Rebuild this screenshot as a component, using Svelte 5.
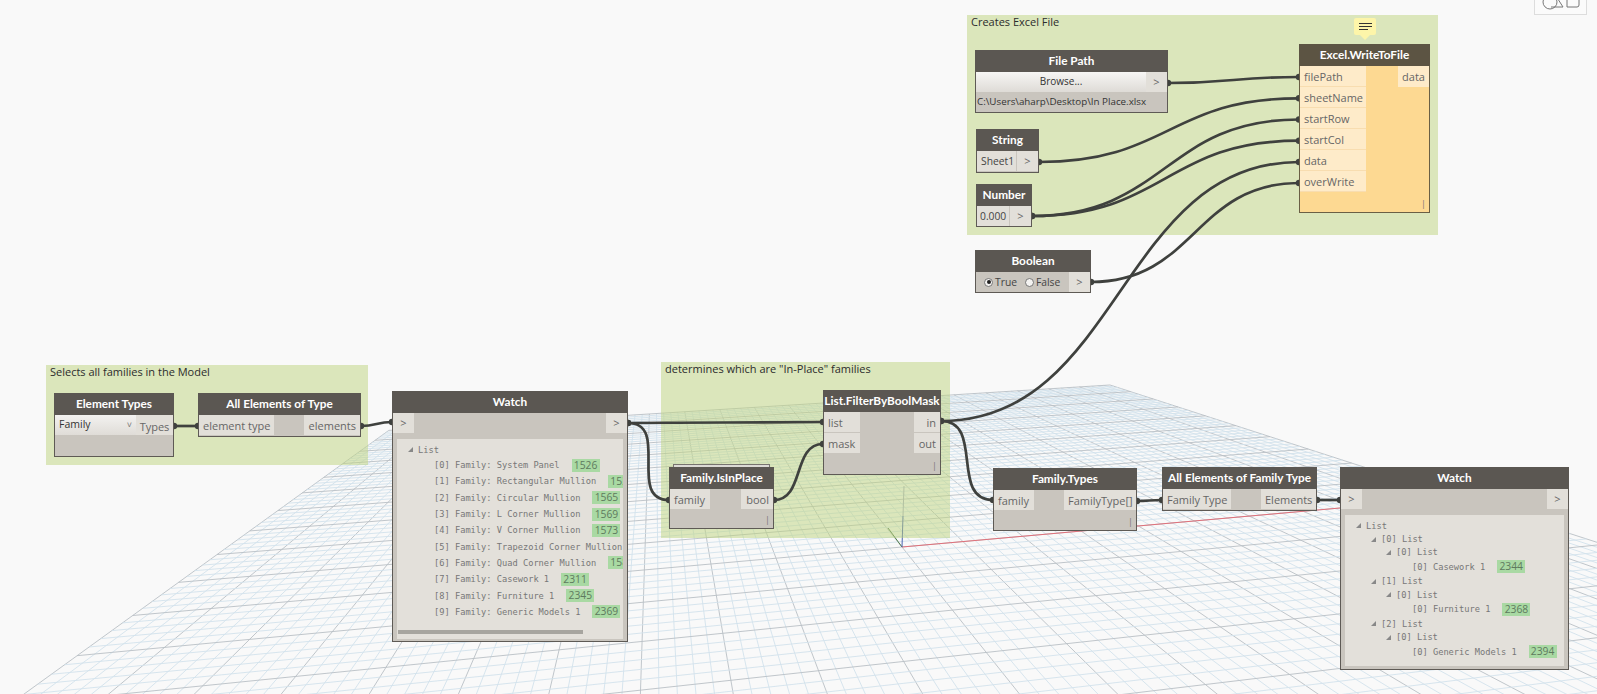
<script>
  const O = [902, 547], VX = [6608, 39], VY = [655, 238];
  const k1 = 0.0108, k2 = 0.0848;
  const P = (u, v) => {
    const d = 1 + k1 * u + k2 * v;
    return [(O[0] + k1 * u * VX[0] + k2 * v * VY[0]) / d, (O[1] + k1 * u * VX[1] + k2 * v * VY[1]) / d];
  };
  const gridLines = [];
  for (let n = -55; n <= 50; n++) {
    const t = n / 5;
    const a = P(t, 10), b = P(t, -10);
    gridLines.push({ x1: a[0], y1: a[1], x2: b[0], y2: b[1], major: n % 5 === 0 });
  }
  for (let n = -50; n <= 50; n++) {
    const t = n / 5;
    const c = P(10, t), e = P(-11, t);
    gridLines.push({ x1: c[0], y1: c[1], x2: e[0], y2: e[1], major: n % 5 === 0 });
  }

  const wires = [
    [174, 426, 198, 426], [361, 426, 392, 422],
    [628, 423, 823, 422], [628, 423, 669, 500],
    [774, 500, 823, 444], [941, 421, 993, 500],
    [941, 421, 1299, 162], [1137, 501, 1162, 500],
    [1317, 500, 1340, 500], [1168, 83, 1299, 77],
    [1039, 162, 1299, 98.3], [1032, 216, 1299, 119.5],
    [1032, 216, 1299, 140.7], [1091, 282, 1299, 183]
  ].map(([x0, y0, x1, y1]) => {
    const d = Math.max((x1 - x0) / 2, 0.55 * Math.abs(y1 - y0));
    return { x0, y0, x1, y1, path: `M${x0} ${y0}C${x0 + d} ${y0} ${x1 - d} ${y1} ${x1} ${y1}` };
  });

  const groups = [
    { x: 967, y: 15, w: 471, h: 220, t: 'Creates Excel File' },
    { x: 46, y: 365, w: 322, h: 100, t: 'Selects all families in the Model' },
    { x: 661, y: 362, w: 289, h: 176, t: 'determines which are "In-Place" families' }
  ];

  const fns = [
    { t: 'All Elements of Type', x: 198, y: 393, w: 163, h: 44, lw: 75, rw: 56, ins: ['element type'], outs: ['elements'] },
    { t: 'List.FilterByBoolMask', x: 823, y: 390, w: 118, h: 85, lw: 36, rw: 26, ins: ['list', 'mask'], outs: ['in', 'out'], lace: true },
    { t: 'Family.IsInPlace', x: 669, y: 467, w: 105, h: 62, lw: 40, rw: 32, ins: ['family'], outs: ['bool'], lace: true, stack: true },
    { t: 'Family.Types', x: 993, y: 468, w: 144, h: 63, lw: 40, rw: 72, ins: ['family'], outs: ['FamilyType[]'], lace: true },
    { t: 'All Elements of Family Type', x: 1162, y: 467, w: 155, h: 44, lw: 68, rw: 55, ins: ['Family Type'], outs: ['Elements'] }
  ];

  const rows1 = [
    ['[0] Family: System Panel', '1526'], ['[1] Family: Rectangular Mullion', '1533'],
    ['[2] Family: Circular Mullion', '1565'], ['[3] Family: L Corner Mullion', '1569'],
    ['[4] Family: V Corner Mullion', '1573'], ['[5] Family: Trapezoid Corner Mullion', '1577'],
    ['[6] Family: Quad Corner Mullion', '1581'], ['[7] Family: Casework 1', '2311'],
    ['[8] Family: Furniture 1', '2345'], ['[9] Family: Generic Models 1', '2369']
  ];
  const rows2 = [
    [0, '[0] List'], [1, '[0] List'], [2, '[0] Casework 1', '2344'],
    [0, '[1] List'], [1, '[0] List'], [2, '[0] Furniture 1', '2368'],
    [0, '[2] List'], [1, '[0] List'], [2, '[0] Generic Models 1', '2394']
  ];
  const excelIn = ['filePath', 'sheetName', 'startRow', 'startCol', 'data', 'overWrite'];
  const box = (x, y, w, h) => `left:${x}px;top:${y}px;width:${w}px;height:${h}px`;
</script>

<div class="canvas">
  <svg class="layer" width="1597" height="694">
    {#each gridLines as l}
      <line x1={l.x1} y1={l.y1} x2={l.x2} y2={l.y2} class={l.major ? 'major' : 'minor'} />
    {/each}
    <line x1="902" y1="547" x2="1340" y2="508" class="axis-x" />
    <line x1="902" y1="547" x2="888" y2="528" class="axis-y" />
    <line x1="902" y1="547" x2="903" y2="516" class="axis-z" />
    <line x1="903" y1="516" x2="904" y2="486" class="axis-z2" />
  </svg>

  {#each groups as g}
    <div class="group" style={box(g.x, g.y, g.w, g.h)}>{g.t}</div>
  {/each}

  <svg class="layer" width="1597" height="694">
    {#each wires as w}
      <path d={w.path} class="wire" />
      <circle cx={w.x0} cy={w.y0} r="3.2" class="nub" />
      <circle cx={w.x1} cy={w.y1} r="3.2" class="nub" />
    {/each}
  </svg>

  {#each fns as n}
    {#if n.stack}
      <div class="stack" style={box(n.x + 4, n.y - 3, n.w - 8, 6)}></div>
    {/if}
    <div class="node" style={box(n.x, n.y, n.w, n.h)}>
      <div class="head">{n.t}</div>
      <div class="ports">
        <div class="col" style="width:{n.lw}px">
          {#each n.ins as p}<div class="port">{p}</div>{/each}
        </div>
        <div class="col right" style="width:{n.rw}px">
          {#each n.outs as p}<div class="port">{p}</div>{/each}
        </div>
      </div>
      {#if n.lace}<div class="lace">|</div>{/if}
    </div>
  {/each}

  <div class="node" style={box(54, 393, 120, 64)}>
    <div class="head">Element Types</div>
    <div class="row">
      <div class="combo"><span>Family</span><span class="chev">˅</span></div>
      <div class="port types">Types</div>
    </div>
  </div>

  <div class="node" style={box(975, 50, 193, 63)}>
    <div class="head">File Path</div>
    <div class="row">
      <div class="browse">Browse...</div>
      <div class="arrow">&gt;</div>
    </div>
    <div class="pathtext">C:\Users\aharp\Desktop\In Place.xlsx</div>
  </div>

  <div class="node" style={box(976, 129, 63, 44)}>
    <div class="head">String</div>
    <div class="row"><div class="val">Sheet1</div><div class="arrow">&gt;</div></div>
  </div>

  <div class="node" style={box(976, 184, 56, 43)}>
    <div class="head">Number</div>
    <div class="row"><div class="val number">0.000</div><div class="arrow">&gt;</div></div>
  </div>

  <div class="node" style={box(975, 250, 116, 43)}>
    <div class="head">Boolean</div>
    <div class="row">
      <div class="radios">
        <span class="radio on"></span><span class="rlabel">True</span>
        <span class="radio off"></span><span class="rlabel">False</span>
      </div>
      <div class="arrow">&gt;</div>
    </div>
  </div>

  <div class="note">
    <span class="bar"></span><span class="bar"></span><span class="bar tail"></span>
  </div>

  <div class="node excel" style={box(1299, 44, 131, 169)}>
    <div class="head">Excel.WriteToFile</div>
    <div class="ports">
      <div class="col ecol">
        {#each excelIn as p}<div class="port">{p}</div>{/each}
      </div>
      <div class="col right dcol"><div class="port">data</div></div>
    </div>
    <div class="lace">|</div>
  </div>

  <div class="node" style={box(392, 391, 236, 251)}>
    <div class="head">Watch</div>
    <div class="row spread"><div class="arrow">&gt;</div><div class="arrow">&gt;</div></div>
    <div class="panel panel1">
      <div class="tree first"><span class="tri"></span>List</div>
      {#each rows1 as r}
        <div class="tree item"><span class="txt">{r[0]}</span><span class="badge">{r[1]}</span></div>
      {/each}
      <div class="scroll"></div>
    </div>
  </div>

  <div class="node" style={box(1340, 467, 229, 203)}>
    <div class="head">Watch</div>
    <div class="row spread"><div class="arrow">&gt;</div><div class="arrow">&gt;</div></div>
    <div class="panel panel2">
      <div class="tree branch"><span class="tri"></span>List</div>
      {#each rows2 as r}
        {#if r[2]}
          <div class="tree leaf"><span class="txt">{r[1]}</span><span class="badge">{r[2]}</span></div>
        {:else}
          <div class="tree branch" class:lvl0={r[0] === 0} class:lvl1={r[0] === 1}><span class="tri"></span>{r[1]}</div>
        {/if}
      {/each}
    </div>
  </div>

  <div class="topbtn">
    <svg width="53" height="16" viewBox="0 0 53 16">
      <circle cx="16" cy="3" r="7" class="ico" />
      <path d="M22 -3L29 8H17" class="ico" />
      <path d="M33 0V8H43Q45 8 45 6V0" class="ico" />
    </svg>
  </div>
</div>

<style>
  :global(body) { margin: 0; background: #f9f9f9; }
  .canvas {
    position: relative;
    width: 1597px;
    height: 694px;
    overflow: hidden;
    background: #f9f9f9;
    font-family: "Open Sans", "Liberation Sans", sans-serif;
  }
  .layer { position: absolute; left: 0; top: 0; }
  .minor { stroke: #d2e2ec; stroke-width: 0.9; }
  .major { stroke: #b9c0c5; stroke-width: 0.9; }
  .axis-x { stroke: #e0707a; stroke-width: 1; }
  .axis-y { stroke: #4f7a4a; stroke-width: 1; }
  .axis-z { stroke: #4a62b0; stroke-width: 1; }
  .axis-z2 { stroke: #a9aec4; stroke-width: 1; }
  .wire { fill: none; stroke: #3f413e; stroke-width: 2.7; }
  .nub { fill: #3f413e; }
  .group {
    position: absolute;
    box-sizing: border-box;
    padding: 0 4px;
    background: rgba(190, 212, 125, 0.5);
    font-size: 11px;
    line-height: 13px;
    color: #2c2c2c;
  }
  .node {
    position: absolute;
    box-sizing: border-box;
    display: flex;
    flex-direction: column;
    background: #c9c5be;
    border: 1px solid #5e5a55;
    border-top: 0;
  }
  .head {
    height: 22px;
    flex: none;
    background: #5b5752;
    color: #fff;
    font-family: Lato, "Open Sans", sans-serif;
    font-size: 11.8px;
    font-weight: 700;
    line-height: 21px;
    text-align: center;
    white-space: nowrap;
    margin: 0 -1px;
  }
  .ports { display: flex; justify-content: space-between; flex: none; }
  .col { display: flex; flex-direction: column; flex: none; }
  .port {
    height: 20px;
    margin-bottom: 1px;
    background: #e2dfd9;
    color: #666;
    font-size: 11px;
    line-height: 21px;
    padding: 0 4px;
    white-space: nowrap;
    box-sizing: border-box;
  }
  .right .port { text-align: right; }
  .lace {
    position: absolute;
    right: 3px;
    bottom: 2px;
    font-size: 9px;
    line-height: 12px;
    color: #777;
  }
  .stack {
    position: absolute;
    box-sizing: border-box;
    border: 1px solid #77746f;
    background: #dcdad5;
  }
  .row { display: flex; flex: none; height: 20px; }
  .spread { justify-content: space-between; }
  .arrow {
    width: 21px;
    flex: none;
    background: #e2dfd9;
    color: #666;
    font-size: 11px;
    line-height: 20px;
    text-align: center;
  }
  .combo {
    width: 81px;
    display: flex;
    justify-content: space-between;
    padding: 0 4px;
    box-sizing: border-box;
    font-size: 10.5px;
    line-height: 19px;
    color: #333;
    background: linear-gradient(#f3f2f0, #dfdcd7);
  }
  .chev { color: #777; font-size: 9px; }
  .types { width: 37px; height: 20px; margin: 0; padding: 0 3px; text-align: center; font-size: 11px; line-height: 23px; flex: none; }
  .browse {
    flex: 1;
    text-align: center;
    font-size: 10px;
    line-height: 19px;
    color: #333;
    background: linear-gradient(#f7f6f4, #dedbd6);
  }
  .pathtext { font-size: 9.8px; line-height: 20px; color: #333; padding-left: 1px; white-space: nowrap; }
  .val { flex: 1; background: #e2dfd9; color: #444; font-size: 10.3px; line-height: 20px; padding-left: 4px; border-right: 1px solid #c9c5be; }
  .number { padding-left: 3px; }
  .radios { flex: 1; display: flex; align-items: center; background: #c9c5be; padding-left: 8px; }
  .radio {
    width: 9px;
    height: 9px;
    border-radius: 50%;
    border: 1px solid #777;
    background: #f4f3f1;
    flex: none;
    box-sizing: border-box;
    position: relative;
  }
  .on::after {
    content: "";
    position: absolute;
    left: 1.5px;
    top: 1.5px;
    width: 4px;
    height: 4px;
    border-radius: 50%;
    background: #222;
  }
  .rlabel { font-size: 10.3px; color: #444; margin: 0 8px 0 2px; }
  .excel { background: #fdd992; border-color: #6a5f45; }
  .excel .head { background: #5c5443; }
  .ecol { width: 66px; }
  .excel .port { background: #feebc9; margin-bottom: 0; height: 21px; border-bottom: 1px solid #f8ddb0; line-height: 22px; }
  .dcol { width: 31px; }
  .excel .dcol .port { border: 0; }
  .note {
    position: absolute;
    left: 1354px;
    top: 18px;
    width: 22px;
    height: 17px;
    background: #fdf5a9;
    border-radius: 2px;
    display: flex;
    flex-direction: column;
    gap: 2px;
    padding: 5px 4px 0 5px;
    box-sizing: border-box;
  }
  .note::after {
    content: "";
    position: absolute;
    left: 6px;
    top: 17px;
    border: 5px solid transparent;
    border-top-color: #fdf5a9;
    border-bottom: 0;
  }
  .bar { display: block; height: 1px; width: 13px; background: #333; flex: none; }
  .tail { width: 9px; }
  .panel {
    position: relative;
    flex: 1;
    margin: 6px 4px 2px;
    background: #e3e0da;
    overflow: hidden;
  }
  .tree {
    font-family: "DejaVu Sans Mono", monospace;
    font-size: 8.7px;
    color: #777;
    white-space: nowrap;
    display: flex;
    align-items: center;
  }
  .first { height: 15px; padding-left: 11px; margin-top: 3px; }
  .item { height: 16.3px; padding-left: 37px; }
  .tri {
    width: 0;
    height: 0;
    border-left: 5px solid transparent;
    border-bottom: 5px solid #888;
    margin-right: 5px;
    flex: none;
  }
  .badge {
    display: inline-block;
    margin-left: 12px;
    width: 28px;
    flex: none;
    height: 13px;
    line-height: 13px;
    text-align: center;
    font-family: "Open Sans", sans-serif;
    font-size: 10.3px;
    color: #5e7a5e;
    background: #a9d9a3;
  }
  .scroll {
    position: absolute;
    left: 1px;
    top: 191px;
    width: 185px;
    height: 4px;
    background: #a7a59f;
  }
  .panel2 { padding-top: 4px; margin: 6px 4px 3px; }
  .branch { height: 13.4px; padding-left: 11px; }
  .branch.lvl0 { padding-left: 26px; }
  .branch.lvl1 { padding-left: 41px; }
  .leaf { height: 15.6px; padding-left: 67px; }
  .topbtn {
    position: absolute;
    left: 1534px;
    top: 0;
    width: 53px;
    height: 15px;
    box-sizing: border-box;
    border: 1px solid #ddd;
    border-top: 0;
    background: #fbfbfb;
    overflow: hidden;
  }
  .topbtn svg { display: block; margin: -1px 0 0 -1px; }
  .ico { fill: none; stroke: #777; stroke-width: 1; }
</style>
